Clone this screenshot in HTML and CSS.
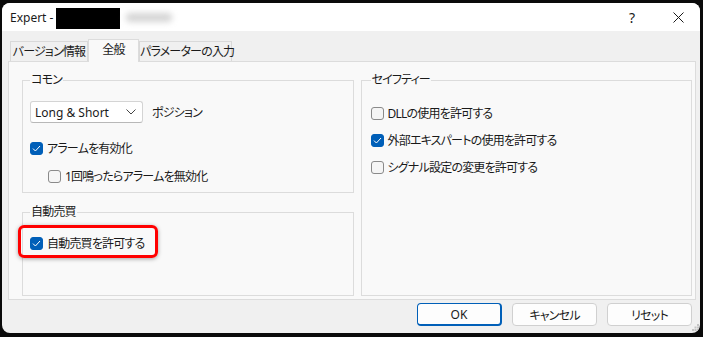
FILE: index.html
```html
<!DOCTYPE html>
<html lang="ja">
<head>
    <meta charset="UTF-8">
    <title>Expert</title>
    <link rel="stylesheet" href="styles.css">
</head>
<body>
    <div class="window">
        <div class="titlebar">
            <span class="title">Expert -</span>
            <span class="redact"></span>
            <span class="blurred"></span>
            <span class="spacer"></span>
            <span class="help">?</span>
            <span class="close">
                <svg width="11" height="11" viewBox="0 0 11 11"><path d="M0.5 0.5 L10.5 10.5 M10.5 0.5 L0.5 10.5" stroke="#1a1a1a" stroke-width="1" fill="none"/></svg>
            </span>
        </div>

        <div class="content">
            <div class="tabs">
                <div class="tab tab-version">バージョン情報</div>
                <div class="tab tab-general active">全般</div>
                <div class="tab tab-params">パラメーターの入力</div>
            </div>

            <div class="panel">
                <div class="col">
                    <fieldset class="group group-common">
                        <legend>コモン</legend>
                        <div class="row row-select">
                            <div class="select">
                                <span>Long &amp; Short</span>
                                <svg width="10" height="6" viewBox="0 0 10 6"><path d="M0.5 0.5 L5 5 L9.5 0.5" stroke="#444" stroke-width="1" fill="none"/></svg>
                            </div>
                            <span class="select-label">ポジション</span>
                        </div>
                        <label class="row check-row alarm">
                            <span class="check on"><svg width="9" height="7" viewBox="0 0 9 7"><path d="M1 3.6 L3.4 6 L8 1" stroke="#fff" stroke-width="1" fill="none"/></svg></span>
                            アラームを有効化
                        </label>
                        <label class="row check-row alarm-once">
                            <span class="check"></span>
                            1回鳴ったらアラームを無効化
                        </label>
                    </fieldset>

                    <fieldset class="group group-auto">
                        <legend>自動売買</legend>
                        <label class="row check-row auto-trade">
                            <span class="highlight"></span>
                            <span class="check on"><svg width="9" height="7" viewBox="0 0 9 7"><path d="M1 3.6 L3.4 6 L8 1" stroke="#fff" stroke-width="1" fill="none"/></svg></span>
                            自動売買を許可する
                        </label>
                    </fieldset>
                </div>

                <div class="col">
                    <fieldset class="group group-safety">
                        <legend>セイフティー</legend>
                        <label class="row check-row">
                            <span class="check"></span>
                            DLLの使用を許可する
                        </label>
                        <label class="row check-row">
                            <span class="check on"><svg width="9" height="7" viewBox="0 0 9 7"><path d="M1 3.6 L3.4 6 L8 1" stroke="#fff" stroke-width="1" fill="none"/></svg></span>
                            外部エキスパートの使用を許可する
                        </label>
                        <label class="row check-row">
                            <span class="check"></span>
                            シグナル設定の変更を許可する
                        </label>
                    </fieldset>
                </div>
            </div>

            <div class="buttons">
                <button class="btn btn-default">OK</button>
                <button class="btn">キャンセル</button>
                <button class="btn">リセット</button>
            </div>
        </div>

        <svg class="grip" width="7" height="7" viewBox="0 0 7 7">
            <rect x="5" y="0" width="2" height="2" fill="#c4c4c4"/>
            <rect x="2.5" y="2.5" width="2" height="2" fill="#c4c4c4"/>
            <rect x="5" y="2.5" width="2" height="2" fill="#c4c4c4"/>
            <rect x="0" y="5" width="2" height="2" fill="#c4c4c4"/>
            <rect x="2.5" y="5" width="2" height="2" fill="#c4c4c4"/>
            <rect x="5" y="5" width="2" height="2" fill="#c4c4c4"/>
        </svg>
    </div>
</body>
</html>
```

FILE: styles.css
```css
html, body {
    margin: 0;
    height: 337px;
    overflow: hidden;
}

body {
    background-color: #0a0a0a;
    font-family: 'Noto Sans', 'Noto Sans CJK JP', sans-serif;
    font-size: 12px;
    color: #1a1a1a;
    font-feature-settings: "palt";
}

.window {
    position: relative;
    margin: 3px 0 0 2px;
    width: 698px;
    height: 330px;
    background-color: #F0F0F0;
    border-radius: 8px;
    overflow: hidden;
    display: flex;
    flex-direction: column;
}

/* title bar */
.titlebar {
    height: 28px;
    background-color: #FFFFFF;
    display: flex;
    align-items: center;
    padding-left: 8px;
    flex-shrink: 0;
}

.title {
    font-size: 12px;
    color: #1a1a1a;
    margin-right: 3px;
}

.redact {
    width: 64px;
    height: 21px;
    background-color: #000;
    margin-top: 2px;
}

.blurred {
    width: 46px;
    height: 9px;
    margin-left: 6px;
    background-color: #d4d4d4;
    border-radius: 4px;
    filter: blur(3px);
}

.spacer {
    flex: 1;
}

.help {
    font-size: 14px;
    width: 14px;
    text-align: center;
    margin-right: 34px;
    color: #1a1a1a;
}

.close {
    display: flex;
    margin-right: 16px;
}

/* dialog body */
.content {
    flex: 1;
    padding: 8px 0 0 6px;
    display: flex;
    flex-direction: column;
    letter-spacing: -0.8px;
}

.tabs {
    display: flex;
    align-items: flex-end;
    margin-left: 2px;
    height: 22px;
}

.tab {
    box-sizing: border-box;
    height: 20px;
    border: 1px solid #D9D9D9;
    border-bottom: none;
    background-color: #F0F0F0;
    text-align: center;
    line-height: 19px;
    white-space: nowrap;
}

.tab-version {
    width: 78px;
}

.tab-general {
    width: 51px;
}

.tab-params {
    width: 93px;
}

.tab.active {
    height: 23px;
    margin-bottom: -1px;
    background-color: #F9F9F9;
    border-color: #DCDCDC;
    line-height: 20px;
    position: relative;
    z-index: 1;
}

.panel {
    box-sizing: border-box;
    width: 688px;
    height: 239px;
    background-color: #F9F9F9;
    border: 1px solid #DCDCDC;
    padding: 11px 3px 3px 13px;
    display: flex;
    gap: 7px;
}

.col {
    width: 332px;
    display: flex;
    flex-direction: column;
}

.group {
    margin: 0;
    padding: 0 7px;
    border: 1px solid #DCDCDC;
    min-width: 0;
    box-sizing: border-box;
}

.group legend {
    padding: 0 1px;
    line-height: 14px;
    margin-left: 0;
}

.group-common {
    height: 120px;
}

.group-auto {
    margin-top: 12px;
    flex: 1;
}

.group-safety {
    flex: 1;
    padding-left: 9px;
}

.row {
    display: flex;
    align-items: center;
    white-space: nowrap;
}

.row-select {
    margin-top: 14px;
    height: 22px;
}

.select {
    box-sizing: border-box;
    width: 113px;
    height: 22px;
    background-color: #FFFFFF;
    border: 1px solid #D4D4D4;
    border-bottom-color: #B8B8B8;
    border-radius: 3px;
    display: flex;
    align-items: center;
    justify-content: space-between;
    padding: 0 6px 0 4px;
    font-size: 12px;
    letter-spacing: 0;
}

.select-label {
    margin-left: 9px;
}

.check-row {
    height: 16px;
    gap: 4px;
    position: relative;
}

.check {
    box-sizing: border-box;
    width: 13px;
    height: 13px;
    border: 1px solid #8A8A8A;
    border-radius: 3px;
    background-color: #F5F5F5;
    display: flex;
    align-items: center;
    justify-content: center;
    flex-shrink: 0;
}

.check.on {
    background-color: #005FB8;
    border-color: #005FB8;
}

.alarm {
    margin-top: 17px;
}

.alarm-once {
    margin-top: 12px;
    margin-left: 18px;
}

.auto-trade {
    margin-top: 16px;
}

.highlight {
    position: absolute;
    left: -12px;
    top: -10px;
    width: 140px;
    height: 33px;
    box-sizing: border-box;
    border: 3px solid #FF0000;
    border-radius: 6px;
    box-shadow: 0 1px 4px rgba(0, 0, 0, 0.35);
}

.group-safety .check-row {
    margin-top: 11px;
}

.group-safety .check-row:first-of-type {
    margin-top: 18px;
}

/* buttons */
.buttons {
    display: flex;
    justify-content: flex-end;
    gap: 10px;
    margin-top: 3px;
    padding-right: 8px;
}

.btn {
    width: 85px;
    height: 23px;
    background-color: #FDFDFD;
    border: 1px solid #D0D0D0;
    border-radius: 4px;
    font-family: 'Noto Sans', 'Noto Sans CJK JP', sans-serif;
    font-size: 12px;
    color: #1a1a1a;
    padding: 0;
    font-feature-settings: "palt";
    letter-spacing: -0.8px;
}

.btn-default {
    border: 2px solid #005FB8;
    border-top-width: 1px;
    border-left-width: 1px;
    letter-spacing: 0;
}

.grip {
    position: absolute;
    right: 1px;
    bottom: 2px;
}
```
